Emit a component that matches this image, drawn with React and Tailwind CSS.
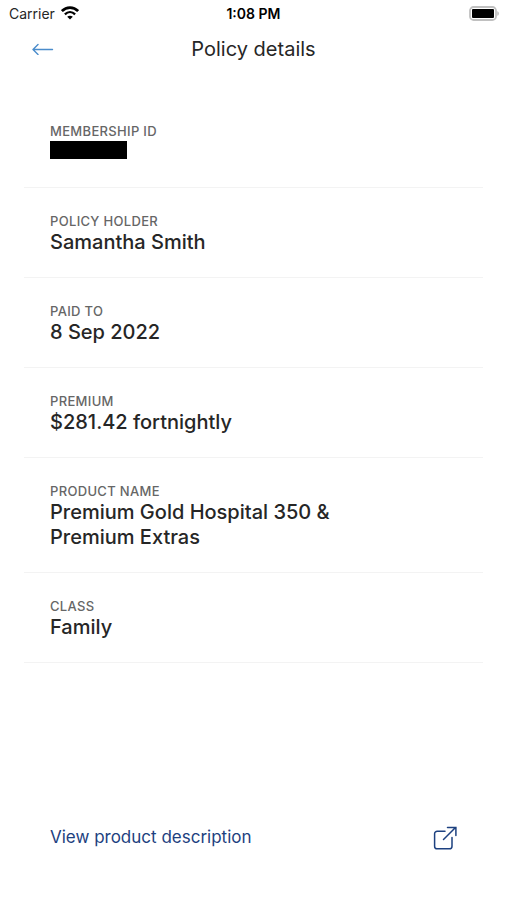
const details = [
  { label: "Membership ID", redacted: true },
  { label: "Policy holder", value: "Samantha Smith" },
  { label: "Paid to", value: "8 Sep 2022" },
  { label: "Premium", value: "$281.42 fortnightly" },
  { label: "Product name", value: "Premium Gold Hospital 350 & Premium Extras" },
  { label: "Class", value: "Family" },
];

function WifiIcon() {
  return (
    <svg className="h-[14px] w-[18px]" viewBox="0 0 18 14" fill="none" aria-hidden="true">
      <path d="M0.9 5.1C5.5 0.5 12.5 0.5 17.1 5.1" stroke="#000" strokeWidth="2.7" />
      <path d="M3.9 8.3C6.9 5.4 11.1 5.4 14.1 8.3" stroke="#000" strokeWidth="2.3" />
      <path d="M9 13.4L6.2 10.7C7.8 9.3 10.2 9.3 11.8 10.7Z" fill="#000" />
    </svg>
  );
}

function BatteryIcon() {
  return (
    <svg className="h-[15px] w-[30px]" viewBox="0 0 30 15" fill="none" aria-hidden="true">
      <rect x="1" y="1" width="26" height="13" rx="3.6" stroke="#c0c0c0" strokeWidth="1.8" />
      <rect x="3" y="3" width="22" height="9" rx="1" fill="#000" />
      <path d="M28.4 5.2C30.2 5.8 30.2 9.2 28.4 9.8Z" fill="#b0b0b0" />
    </svg>
  );
}

function BackIcon() {
  return (
    <svg className="h-3 w-[22px]" viewBox="0 0 22 12" fill="none" stroke="#4a8ccb" strokeWidth="1.4" aria-hidden="true">
      <path d="M20.5 6.5H1.2M6 1.5L1 6.5L6 11.5" strokeLinecap="round" strokeLinejoin="round" />
    </svg>
  );
}

function OpenIcon() {
  return (
    <svg className="h-6 w-6" viewBox="0 0 24 24" fill="none" stroke="#1d4180" strokeWidth="1.5" aria-hidden="true">
      <path d="M12 5.2H4.2A2.6 2.6 0 0 0 1.6 7.8V20.2A2.6 2.6 0 0 0 4.2 22.8H16.4A2.6 2.6 0 0 0 19 20.2V11.6" strokeLinecap="round" />
      <path d="M10.5 13.5L22.5 1.5M14.5 1.4H22.9V9.6" strokeLinecap="round" />
    </svg>
  );
}

export default function App() {
  return (
    <div className="flex min-h-screen flex-col bg-white font-['Inter','Liberation_Sans',sans-serif] text-[#262626]">
      <div className="grid h-[26px] grid-cols-3 items-center px-2 text-black">
        <div className="flex items-center gap-[6px] pl-px text-[14px] text-[#262626]">
          Carrier
          <WifiIcon />
        </div>
        <div className="text-center text-[14px] font-semibold">1:08 PM</div>
        <div className="flex justify-end">
          <BatteryIcon />
        </div>
      </div>

      <header className="grid h-[46px] grid-cols-[60px_1fr_60px] items-center">
        <button type="button" aria-label="Back" className="flex h-full items-center pl-8">
          <BackIcon />
        </button>
        <h1 className="text-center text-[20px]">Policy details</h1>
      </header>

      <main className="flex flex-1 flex-col px-6 pt-[26px]">
        <dl>
          {details.map((item) => (
            <div key={item.label} className="border-b border-[#f3f3f3] px-[26px] pt-6 pb-[22px]">
              <dt className="text-[13px] leading-[18px] font-medium tracking-wide text-[#666] uppercase">{item.label}</dt>
              <dd className="max-w-[300px] text-[20px] leading-[25px] font-medium">
                {item.redacted ? (
                  <div className="h-[25px] pt-px">
                    <div className="h-[18px] w-[77px] bg-black" />
                  </div>
                ) : (
                  item.value
                )}
              </dd>
            </div>
          ))}
        </dl>

        <a
          href="#product-description"
          className="mt-auto mb-8 flex h-[60px] items-center justify-between px-[26px] text-[17px] text-[#1d4180]"
        >
          View product description
          <OpenIcon />
        </a>
      </main>
    </div>
  );
}
